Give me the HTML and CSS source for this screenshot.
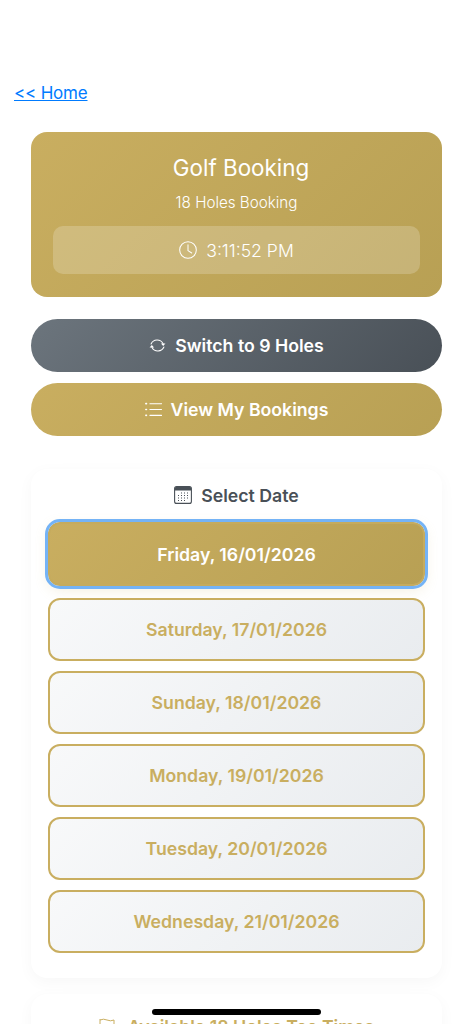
FILE: index.html
```html
<!DOCTYPE html>
<html lang="en">
<head>
<meta charset="utf-8">
<title>Golf Booking</title>
<link rel="stylesheet" href="styles.css">
</head>
<body>
<p class="home-row"><a class="home-link" href="#">&lt;&lt; Home</a></p>
<main class="page">
  <header class="hero">
    <h1 class="hero-title">Golf Booking</h1>
    <p class="hero-sub">18 Holes Booking</p>
    <div class="clock">
      <svg class="clock-icon" viewBox="0 0 16 16" fill="none" stroke="currentColor" stroke-width="0.9" stroke-linecap="round" stroke-linejoin="round"><circle cx="8" cy="8" r="7.4"/><path d="M8 3.4V8.6L11.3 10.7"/></svg>
      <span>3:11:52 PM</span>
    </div>
  </header>
  <a class="action action-grey" href="#">
    <svg class="action-icon" viewBox="0 0 18 18" fill="none" stroke="currentColor" stroke-width="1.1" stroke-linecap="round"><path d="M2.2 7.4A7 7 0 0 1 14.8 7"/><path d="M15.8 10.6A7 7 0 0 1 3.2 11"/><path d="M12.6 6.8h4.8L15 9.4z" fill="currentColor" stroke="none"/><path d="M.6 11.2h4.8L3 8.6z" fill="currentColor" stroke="none"/></svg>
    <span>Switch to 9 Holes</span>
  </a>
  <a class="action action-gold" href="#">
    <svg class="action-icon" viewBox="0 0 16 16" fill="none" stroke="currentColor" stroke-width="1" stroke-linecap="round"><path d="M4.6 2.5h11M4.6 8h11M4.6 13.5h11"/><path d="M.8 2.5h.6M.8 8h.6M.8 13.5h.6" stroke-width="1.5"/></svg>
    <span>View My Bookings</span>
  </a>
  <section class="panel">
    <h2 class="panel-title">
      <svg class="cal-icon" viewBox="0 0 18 18" fill="none"><rect x=".6" y=".6" width="16.8" height="16.8" rx="2" stroke="currentColor" stroke-width="1.1"/><path d="M1 1.6Q1 1 2 1h14q1 0 1 .6V4.4H1z" fill="currentColor"/><path d="M7 7h1M10 7h1M13 7h1M4 9.5h1M7 9.5h1M10 9.5h1M13 9.5h1M4 12h1M7 12h1M10 12h1M13 12h1M4 14.5h1M7 14.5h1M10 14.5h1" stroke="currentColor" stroke-width="1.2"/></svg>
      <span>Select Date</span>
    </h2>
    <div class="dates">
      <button class="date date-active" type="button">Friday, 16/01/2026</button>
      <button class="date" type="button">Saturday, 17/01/2026</button>
      <button class="date" type="button">Sunday, 18/01/2026</button>
      <button class="date" type="button">Monday, 19/01/2026</button>
      <button class="date" type="button">Tuesday, 20/01/2026</button>
      <button class="date" type="button">Wednesday, 21/01/2026</button>
    </div>
  </section>
  <section class="panel panel-times">
    <h2 class="panel-title panel-title-gold">
      <svg class="flag-icon" viewBox="0 0 16 16" fill="none" stroke="currentColor" stroke-width="1" stroke-linejoin="round"><path d="M1 1v14M1 2q3.5-1.6 7 0t7 0v8q-3.5 1.6-7 0t-7 0"/></svg>
      <span>Available 18 Holes Tee Times</span>
    </h2>
  </section>
</main>
<div class="home-indicator"></div>
</body>
</html>
```
FILE: styles.css
```css
* { box-sizing: border-box; }
html, body { height: 1024px; overflow: hidden; }
body {
  margin: 0;
  background: #fff;
  font-family: Inter, "Liberation Sans", sans-serif;
  color: #495057;
  position: relative;
}
.home-row {
  margin: 0;
  padding: 82px 14px 0;
  font-size: 17px;
  line-height: 22px;
  letter-spacing: -0.2px;
}
.home-link { color: #007bff; text-decoration: underline; }
.page {
  padding: 28px 31px 0;
  display: flex;
  flex-direction: column;
}
.hero {
  height: 165px;
  padding: 23px 22px 0;
  border-radius: 16px;
  background: linear-gradient(135deg, #c9ae60, #b8a054);
  color: #fff;
  text-align: center;
}
.hero-title {
  margin: 0;
  padding-left: 9px;
  font-size: 22.4px;
  line-height: 26px;
  font-weight: 400;
}
.hero-sub {
  margin: 13px 0 0;
  font-size: 15.2px;
  line-height: 18px;
  font-weight: 300;
}
.clock {
  margin-top: 14px;
  height: 48px;
  border-radius: 10px;
  background: rgba(255, 255, 255, 0.2);
  display: flex;
  align-items: center;
  justify-content: center;
  gap: 9px;
  font-size: 17.6px;
  font-weight: 300;
}
.clock-icon { width: 18px; height: 18px; }
.action {
  height: 53px;
  margin-top: 11px;
  padding-bottom: 1px;
  border-radius: 27px;
  display: flex;
  align-items: center;
  justify-content: center;
  gap: 9px;
  color: #fff;
  font-size: 17.7px;
  font-weight: 600;
  text-decoration: none;
}
.action-grey {
  margin-top: 22px;
  background: linear-gradient(135deg, #6c757d, #495057);
}
.action-gold { background: linear-gradient(135deg, #c9ae60, #b8a054); }
.action-icon { width: 17px; height: 17px; }
.panel {
  margin-top: 33px;
  height: 509px;
  padding: 14px 17px 0;
  background: #fff;
  border-radius: 16px;
  box-shadow: 0 4px 16px rgba(0, 0, 0, 0.035);
}
.panel-title {
  margin: 0;
  height: 24px;
  display: flex;
  align-items: center;
  justify-content: center;
  gap: 9px;
  font-size: 17.7px;
  font-weight: 600;
  color: #495057;
}
.cal-icon { width: 18px; height: 18px; }
.dates {
  margin-top: 15px;
  display: flex;
  flex-direction: column;
  gap: 10px;
}
.date {
  height: 63px;
  padding: 0;
  border: 2.4px solid #c9ae60;
  border-radius: 12px;
  background: linear-gradient(135deg, #f8f9fa, #e9ecef);
  color: #c9ae60;
  font: 600 17.7px Inter, "Liberation Sans", sans-serif;
}
.date-active {
  height: 64px;
  width: 100%;
  margin-bottom: 1.5px;
  border: 2px solid #c5ab5e;
  color: #fff;
  background: linear-gradient(135deg, #c9ae60, #b8a054);
  outline: 3.5px solid #74b3f6;
  box-shadow: 0 4px 14px rgba(201, 174, 96, 0.2);
}
.panel-times { margin-top: 16px; padding-top: 20px; }
.panel-title-gold { color: #c9ae60; gap: 13px; }
.flag-icon { width: 16px; height: 16px; }
.home-indicator {
  position: absolute;
  left: 152px;
  top: 1009px;
  width: 169px;
  height: 6px;
  border-radius: 3px;
  background: #000;
}
```
